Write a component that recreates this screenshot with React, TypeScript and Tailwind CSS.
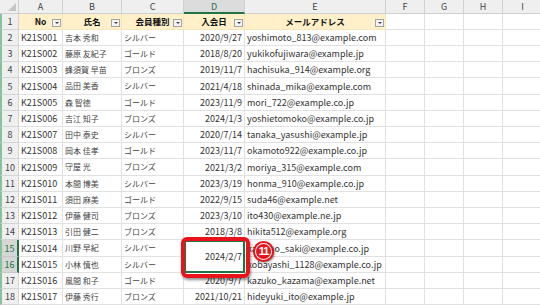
const rows = [
  ["K21S001", "吉本 秀和", "シルバー", "2020/9/27", "yoshimoto_813@example.com"],
  ["K21S002", "藤原 友紀子", "ゴールド", "2018/8/20", "yukikofujiwara@example.jp"],
  ["K21S003", "蜂須賀 早苗", "ブロンズ", "2019/11/7", "hachisuka_914@example.org"],
  ["K21S004", "品田 美香", "シルバー", "2021/4/18", "shinada_mika@example.com"],
  ["K21S005", "森 智徳", "ゴールド", "2023/11/9", "mori_722@example.co.jp"],
  ["K21S006", "吉江 知子", "ブロンズ", "2024/1/3", "yoshietomoko@example.co.jp"],
  ["K21S007", "田中 泰史", "シルバー", "2020/7/14", "tanaka_yasushi@example.jp"],
  ["K21S008", "岡本 佳孝", "ゴールド", "2023/11/7", "okamoto922@example.co.jp"],
  ["K21S009", "守屋 光", "ブロンズ", "2021/3/2", "moriya_315@example.com"],
  ["K21S010", "本間 博美", "シルバー", "2023/3/19", "honma_910@example.co.jp"],
  ["K21S011", "須田 麻美", "ゴールド", "2022/9/15", "suda46@example.net"],
  ["K21S012", "伊藤 健司", "ブロンズ", "2023/3/10", "ito430@example.ne.jp"],
  ["K21S013", "引田 健二", "ブロンズ", "2018/3/8", "hikita512@example.org"],
  ["K21S014", "川野 早紀", "シルバー", "2024/2/7", "kawano_saki@example.co.jp"],
  ["K21S015", "小林 慎也", "シルバー", "", "kobayashi_1128@example.co.jp"],
  ["K21S016", "風間 和子", "ゴールド", "2020/9/7", "kazuko_kazama@example.net"],
  ["K21S017", "伊藤 秀行", "ブロンズ", "2021/10/21", "hideyuki_ito@example.jp"],
];

const letters = ["A", "B", "C", "D", "E", "F", "G", "H", "I"];
const headers = ["No", "氏名", "会員種別", "入会日", "メールアドレス"];

const cell = "border-r border-b border-[#e1e1e1] overflow-hidden whitespace-nowrap flex items-center px-[2px]";

function FilterButton() {
  return (
    <span className="absolute right-[1px] top-[5px] w-[9px] h-[8px] border border-[#a3a3a3] bg-[#f4f4f4] flex items-center justify-center">
      <span className="block w-0 h-0 border-l-[2px] border-r-[2px] border-t-[2px] border-l-transparent border-r-transparent border-t-[#444]" />
    </span>
  );
}

export default function App() {
  return (
    <div className="relative w-[540px] h-[305px] overflow-hidden bg-white font-['Noto_Sans_CJK_JP',sans-serif] leading-none text-[#333]">
      <div className="grid grid-cols-[19px_44px_59px_62px_61px_141px_39px_39px_39px_40px] grid-rows-[14px_16px_16px_16px_16px_17px_16px_16px_16px_16px_17px_16px_16px_16px_16px_17px_16px_16px_16px]">
        {/* corner */}
        <div className="relative bg-[#efefef] border-r border-b border-[#cfcfcf]">
          <span className="absolute right-[2px] bottom-[2px] w-0 h-0 border-l-[8px] border-t-[8px] border-l-transparent border-t-transparent border-b-0 border-r-[0px]" />
          <span className="absolute right-[2px] bottom-[2px] w-0 h-0 border-l-[8px] border-b-[8px] border-l-transparent border-b-[#c4c4c4]" />
        </div>
        {letters.map((l) =>
          l === "D" ? (
            <div key={l} className="bg-[#dcdcdc] border-r border-b-2 border-r-[#cfcfcf] border-b-[#217346] text-[#217346] text-[9px] flex items-center justify-center">
              {l}
            </div>
          ) : (
            <div key={l} className="bg-[#efefef] border-r border-b border-[#cfcfcf] text-[#444] text-[9px] flex items-center justify-center">
              {l}
            </div>
          )
        )}

        {/* row 1: table header */}
        <div className="bg-[#efefef] border-r border-b border-[#d4d4d4] border-l-2 border-l-[#86c29c] text-[#444] text-[9px] flex items-center justify-center">
          1
        </div>
        {headers.map((h) => (
          <div key={h} className="relative bg-[#fff0c9] border-r border-b border-[#f6e6bb] flex items-center justify-center font-bold text-[8.5px] text-[#111]">
            {h}
            <FilterButton />
          </div>
        ))}
        {["F", "G", "H", "I"].map((c) => (
          <div key={c} className={cell} />
        ))}

        {rows.map((r, i) => {
          const n = i + 2;
          const selected = n === 15 || n === 16;
          return [
            selected ? (
              <div key={`h${n}`} className="bg-[#d6d6d6] border-r-2 border-r-[#217346] border-b border-b-[#c8c8c8] border-l-2 border-l-[#86c29c] text-[#217346] text-[9px] flex items-center justify-center">
                {n}
              </div>
            ) : (
              <div key={`h${n}`} className="bg-[#efefef] border-r border-b border-[#d4d4d4] border-l-2 border-l-[#86c29c] text-[#444] text-[9px] flex items-center justify-center">
                {n}
              </div>
            ),
            <div key={`a${n}`} className={`${cell} text-[9px]`}>{r[0]}</div>,
            <div key={`b${n}`} className={`${cell} text-[8px] text-[#444]`}>{r[1]}</div>,
            <div key={`c${n}`} className={`${cell} text-[8px] text-[#444]`}>{r[2]}</div>,
            n === 16 ? null : n === 15 ? (
              <div key={`d${n}`} className="row-span-2 border-2 border-[#217346] flex items-center justify-end pr-[1px] text-[9px]">
                {r[3]}
              </div>
            ) : (
              <div key={`d${n}`} className={`${cell} justify-end text-[9px]`}>{r[3]}</div>
            ),
            <div key={`e${n}`} className={`${cell} text-[9px]`}>{r[4]}</div>,
            <div key={`f${n}`} className={cell} />,
            <div key={`g${n}`} className={cell} />,
            <div key={`hh${n}`} className={cell} />,
            <div key={`i${n}`} className={cell} />,
          ];
        })}
      </div>

      {/* annotation: red frame */}
      <div className="absolute left-[181px] top-[237px] w-[69px] h-[41px] border-[4px] border-[#e8131b] rounded-[6px] shadow-[1px_2px_3px_rgba(0,0,0,0.45)]" />

      {/* annotation: circled number */}
      <div className="absolute left-[253px] top-[241px] w-[21px] h-[21px] rounded-full bg-[#e8131b] p-[2px] shadow-[1px_1px_2px_rgba(0,0,0,0.4)]">
        <div className="w-full h-full rounded-full bg-white p-[1px]">
          <div className="w-full h-full rounded-full bg-[#e8131b] flex items-center justify-center text-white font-bold text-[11px] font-['Liberation_Sans',sans-serif] tracking-[-1px]">
            11
          </div>
        </div>
      </div>
    </div>
  );
}
